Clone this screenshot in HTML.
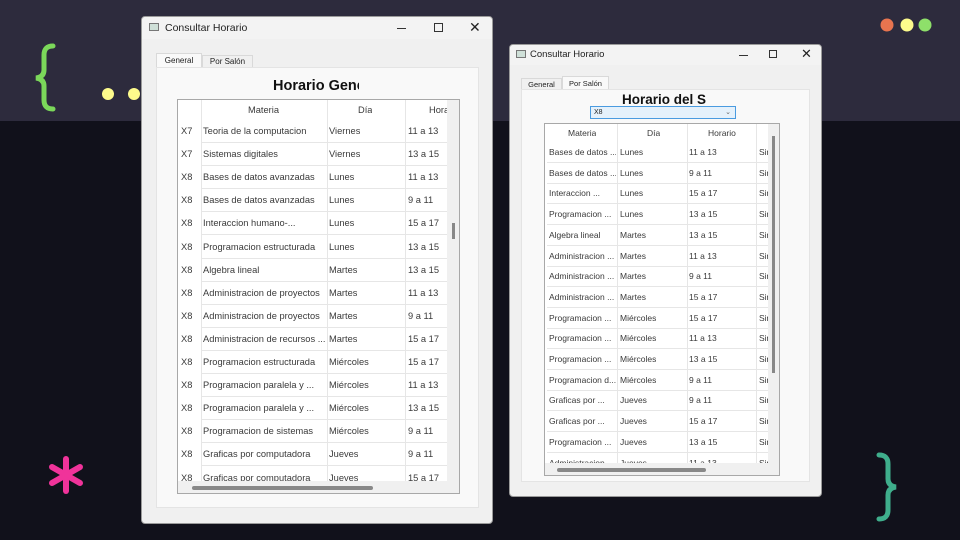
<!DOCTYPE html>
<html><head><meta charset="utf-8"><style>
*{margin:0;padding:0;box-sizing:border-box}
body{width:960px;height:540px;overflow:hidden;background:#11111b;position:relative;font-family:"Liberation Sans",sans-serif;}
.band{position:absolute;left:0;top:0;width:960px;height:121px;background:#2d2b3d}
.abs{position:absolute}
.win{position:absolute;background:#f0f0f0;border:1px solid #9a9a9a;border-radius:4px;overflow:hidden}
.tb{position:absolute;left:0;top:0;right:0;background:#f3f3f3;font-size:10px;color:#222}
.tab{position:absolute;font-size:8px;color:#222;text-align:center;border:1px solid #d9d9d9;border-bottom:none}
.panel{position:absolute;background:#f9f9f9;border:1px solid #e4e4e4}
.tbl{position:absolute;background:#fff;border:1px solid #a8a8a8;overflow:hidden}
.cell{position:absolute;font-size:9.3px;color:#3a3a3a;white-space:nowrap;overflow:hidden}
.hl{position:absolute;background:#e6e6e6;height:1px}
.vl{position:absolute;background:#e6e6e6;width:1px}
</style></head><body>
<div class="band"></div>
<svg class="abs" style="left:0;top:0" width="960" height="540">
<path d="M53 46 Q44 46 44 55 L44 70 Q44 77 36 78 Q44 79 44 86 L44 100 Q44 109 53 109" fill="none" stroke="#7bd85a" stroke-width="5" stroke-linecap="round"/>
<circle cx="108" cy="94" r="6" fill="#fdfb8c"/><circle cx="134" cy="94" r="6" fill="#fdfb8c"/>
<circle cx="887" cy="25" r="6.5" fill="#e8744f"/><circle cx="907" cy="25" r="6.5" fill="#fdfb8c"/><circle cx="925" cy="25" r="6.5" fill="#8ee06a"/>
<path d="M879 455 Q888 455 888 464 L888 479 Q888 486 896 487 Q888 488 888 495 L888 510 Q888 519 879 519" fill="none" stroke="#3fae8c" stroke-width="5" stroke-linecap="round"/>
<g stroke="#f0339a" stroke-width="6" stroke-linecap="round"><line x1="66" y1="459" x2="66" y2="491"/><line x1="52" y1="467" x2="80" y2="483"/><line x1="52" y1="483" x2="80" y2="467"/></g>
</svg>

<!-- LEFT WINDOW -->
<div class="win" style="left:141px;top:16px;width:352px;height:508px">
 <div class="tb" style="height:22px">
  <div class="abs" style="left:7px;top:6px;width:10px;height:8px;border:1px solid #777;background:#cfe0d8"></div>
  <div class="abs" style="left:23px;top:5px;font-size:10.5px">Consultar Horario</div>
  <div class="abs" style="left:255px;top:11px;width:9px;height:1px;background:#333"></div>
  <div class="abs" style="left:292px;top:6px;width:9px;height:9px;border:1px solid #333"></div>
  <div class="abs" style="left:327px;top:2px;font-size:14px">✕</div>
 </div>
 <div class="tab" style="left:14px;top:36px;width:46px;height:15px;background:#f9f9f9;line-height:14px">General</div>
 <div class="tab" style="left:60px;top:38px;width:51px;height:13px;background:#f0f0f0;line-height:12px">Por Salón</div>
 <div class="panel" style="left:14px;top:50px;width:323px;height:441px">
  <div class="abs" style="left:116px;top:10px;width:86px;overflow:hidden;white-space:nowrap;font-weight:bold;font-size:14.5px;color:#111">Horario General</div>
 </div>
 <div class="tbl" style="left:35px;top:82px;width:283px;height:395px">
  <div id="L"></div>
 </div>
</div>

<!-- RIGHT WINDOW -->
<div class="win" style="left:509px;top:44px;width:313px;height:453px">
 <div class="tb" style="height:20px">
  <div class="abs" style="left:6px;top:5px;width:10px;height:8px;border:1px solid #777;background:#cfe0d8"></div>
  <div class="abs" style="left:20px;top:4px;font-size:9.5px">Consultar Horario</div>
  <div class="abs" style="left:229px;top:10px;width:9px;height:1px;background:#333"></div>
  <div class="abs" style="left:259px;top:5px;width:8px;height:8px;border:1px solid #333"></div>
  <div class="abs" style="left:291px;top:1px;font-size:13px">✕</div>
 </div>
 <div class="tab" style="left:11px;top:33px;width:41px;height:12px;background:#f0f0f0;line-height:11px;font-size:7.5px">General</div>
 <div class="tab" style="left:52px;top:31px;width:47px;height:14px;background:#f9f9f9;line-height:13px;font-size:7.5px">Por Salón</div>
 <div class="panel" style="left:11px;top:44px;width:289px;height:393px">
  <div class="abs" style="left:100px;top:2px;width:84px;overflow:hidden;white-space:nowrap;font-weight:bold;font-size:13.5px;color:#111">Horario del Salón</div>
  <div class="abs" style="left:68px;top:16px;width:146px;height:13px;background:#e5f1fb;border:1px solid #4a9be0;font-size:7px;line-height:11px;padding-left:3px;color:#222">X8<span style="position:absolute;right:4px;top:0;color:#666">⌄</span></div>
 </div>
 <div class="tbl" style="left:34px;top:78px;width:236px;height:353px">
  <div id="R"></div>
 </div>
</div>

<script>
(function(){
var L=[["X7","Teoria de la computacion","Viernes","11 a 13"],["X7","Sistemas digitales","Viernes","13 a 15"],["X8","Bases de datos avanzadas","Lunes","11 a 13"],["X8","Bases de datos avanzadas","Lunes","9 a 11"],["X8","Interaccion humano-...","Lunes","15 a 17"],["X8","Programacion estructurada","Lunes","13 a 15"],["X8","Algebra lineal","Martes","13 a 15"],["X8","Administracion de proyectos","Martes","11 a 13"],["X8","Administracion de proyectos","Martes","9 a 11"],["X8","Administracion de recursos ...","Martes","15 a 17"],["X8","Programacion estructurada","Miércoles","15 a 17"],["X8","Programacion paralela y ...","Miércoles","11 a 13"],["X8","Programacion paralela y ...","Miércoles","13 a 15"],["X8","Programacion de sistemas","Miércoles","9 a 11"],["X8","Graficas por computadora","Jueves","9 a 11"],["X8","Graficas por computadora","Jueves","15 a 17"]];
var h='';
h+='<div class="cell" style="left:70px;top:5px">Materia</div><div class="cell" style="left:180px;top:5px">Día</div><div class="cell" style="left:251px;top:5px;width:18px">Horario</div>';
[23,149,227].forEach(function(x){h+='<div class="vl" style="left:'+x+'px;top:0;height:400px"></div>'});
for(var i=0;i<L.length;i++){var t=20+i*23.1;var r=L[i];
 h+='<div class="hl" style="left:23px;width:250px;top:'+(t+22)+'px"></div>';
 h+='<div class="cell" style="left:3px;top:'+(t+6)+'px">'+r[0]+'</div><div class="cell" style="left:25px;top:'+(t+6)+'px;width:123px">'+r[1]+'</div><div class="cell" style="left:151px;top:'+(t+6)+'px">'+r[2]+'</div><div class="cell" style="left:230px;top:'+(t+6)+'px;width:39px">'+r[3]+'</div>';}
h+='<div class="abs" style="left:269px;top:0;width:13px;height:381px;background:#f0f0f0"></div><div class="abs" style="left:274px;top:123px;width:3px;height:16px;background:#888"></div>';
h+='<div class="abs" style="left:0;top:381px;width:283px;height:13px;background:#f0f0f0"></div><div class="abs" style="left:14px;top:386px;width:181px;height:4px;background:#888;border-radius:2px"></div>';
document.getElementById('L').innerHTML=h;
var R=[["Bases de datos ...","Lunes","11 a 13"],["Bases de datos ...","Lunes","9 a 11"],["Interaccion ...","Lunes","15 a 17"],["Programacion ...","Lunes","13 a 15"],["Algebra lineal","Martes","13 a 15"],["Administracion ...","Martes","11 a 13"],["Administracion ...","Martes","9 a 11"],["Administracion ...","Martes","15 a 17"],["Programacion ...","Miércoles","15 a 17"],["Programacion ...","Miércoles","11 a 13"],["Programacion ...","Miércoles","13 a 15"],["Programacion d...","Miércoles","9 a 11"],["Graficas por ...","Jueves","9 a 11"],["Graficas por ...","Jueves","15 a 17"],["Programacion ...","Jueves","13 a 15"],["Administracion ...","Jueves","11 a 13"]];
h='<div class="cell" style="left:23px;top:4px;font-size:8.5px">Materia</div><div class="cell" style="left:102px;top:4px;font-size:8.5px">Día</div><div class="cell" style="left:163px;top:4px;font-size:8.5px">Horario</div>';
[72,142,211].forEach(function(x){h+='<div class="vl" style="left:'+x+'px;top:0;height:360px"></div>'});
for(var i=0;i<R.length;i++){var t=18+i*20.7;var r=R[i];
 h+='<div class="hl" style="left:2px;width:230px;top:'+(t+20)+'px"></div>';
 h+='<div class="cell" style="left:4px;top:'+(t+5)+'px;font-size:8.5px;width:67px">'+r[0]+'</div><div class="cell" style="left:75px;top:'+(t+5)+'px;font-size:8.5px">'+r[1]+'</div><div class="cell" style="left:144px;top:'+(t+5)+'px;font-size:8.5px">'+r[2]+'</div><div class="cell" style="left:214px;top:'+(t+5)+'px;font-size:8.5px;width:9px">Sin</div>';}
h+='<div class="abs" style="left:223px;top:0;width:12px;height:339px;background:#f0f0f0"></div><div class="abs" style="left:227px;top:12px;width:3px;height:237px;background:#888"></div>';
h+='<div class="abs" style="left:0;top:339px;width:236px;height:13px;background:#f0f0f0"></div><div class="abs" style="left:12px;top:344px;width:149px;height:4px;background:#888;border-radius:2px"></div>';
document.getElementById('R').innerHTML=h;
})();
</script>
</body></html>
